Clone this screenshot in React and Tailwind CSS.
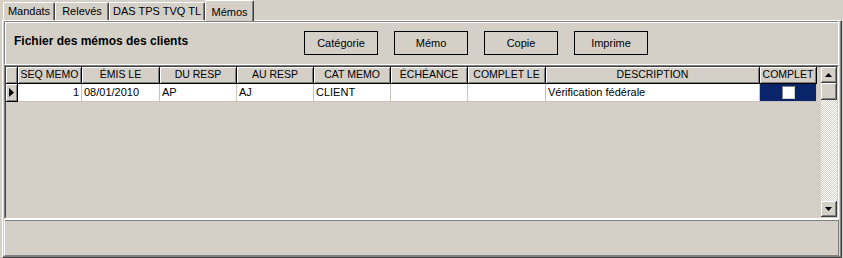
import React from 'react';

const tabs = [
  { label: 'Mandats', w: 'w-[52px]' },
  { label: 'Relevés', w: 'w-[54px]' },
  { label: 'DAS TPS TVQ TL', w: 'w-[96px]' },
];

const cols = [
  { key: 'seq', label: 'SEQ MEMO', w: 'w-[64px]', align: 'text-right' },
  { key: 'emis', label: 'ÉMIS LE', w: 'w-[78px]' },
  { key: 'du', label: 'DU RESP', w: 'w-[77px]' },
  { key: 'au', label: 'AU RESP', w: 'w-[77px]' },
  { key: 'cat', label: 'CAT MEMO', w: 'w-[77px]' },
  { key: 'ech', label: 'ÉCHÉANCE', w: 'w-[77px]' },
  { key: 'compLe', label: 'COMPLET LE', w: 'w-[78px]' },
  { key: 'desc', label: 'DESCRIPTION', w: 'w-[214px]' },
];

const row = {
  seq: '1',
  emis: '08/01/2010',
  du: 'AP',
  au: 'AJ',
  cat: 'CLIENT',
  ech: '',
  compLe: '',
  desc: 'Vérification fédérale',
};

const buttons = ['Catégorie', 'Mémo', 'Copie', 'Imprime'];

function Tab({ label, w }) {
  return (
    <div className={`${w} h-[18px] flex items-center justify-center border-l border-t border-white border-r border-r-[#404040] shadow-[inset_-1px_0_0_#808080] rounded-tl-[2px] rounded-tr-[2px]`}>
      {label}
    </div>
  );
}

function Arrow({ down }) {
  return (
    <svg width="7" height="4" viewBox="0 0 7 4">
      <polygon points={down ? '0,0 7,0 3.5,4' : '0,4 7,4 3.5,0'} fill="#000" />
    </svg>
  );
}

function ScrollButton({ children }) {
  return (
    <div className="h-[16px] w-[16px] flex items-center justify-center bg-[#d4d0c8] border-r border-b border-[#404040] shadow-[inset_1px_1px_0_#fff,inset_-1px_-1px_0_#808080]">
      {children}
    </div>
  );
}

export default function App() {
  return (
    <div className="w-[843px] h-[258px] bg-[#d4d0c8] flex flex-col overflow-hidden font-['Liberation_Sans',Arial,sans-serif] text-[11px] text-black">
      {/* Tabs */}
      <div className="h-[20px] flex items-end pl-[3px] relative z-10">
        {tabs.map((t) => (
          <Tab key={t.label} {...t} />
        ))}
        <div className="w-[49px] h-[21px] -mb-[1px] flex items-start justify-center pt-[3px] bg-[#d4d0c8] border-l border-t border-white border-r border-r-[#404040] shadow-[inset_-1px_0_0_#808080] rounded-tl-[2px] rounded-tr-[2px]">
          Mémos
        </div>
      </div>

      {/* Tab page */}
      <div className="ml-[2px] w-[840px] h-[238px] flex flex-col border-l border-t border-white border-r border-b border-r-[#404040] border-b-[#404040] shadow-[inset_-1px_-1px_0_#808080] pl-[1px] pr-[2px] pb-[1px]">
        {/* Header panel */}
        <div className="h-[44px] flex items-center border-t border-l border-[#808080] border-b border-r border-b-white border-r-white shadow-[inset_1px_1px_0_#fff] pl-[9px]">
          <div className="w-[290px] text-[12px] font-bold -mt-[4px]">Fichier des mémos des clients</div>
          <div className="flex gap-[16px]">
            {buttons.map((b) => (
              <div key={b} className="w-[74px] h-[24px] flex items-center justify-center border border-black">
                {b}
              </div>
            ))}
          </div>
        </div>

        {/* Grid */}
        <div className="h-[154px] border border-[#808080] border-b-white border-r-white">
          <div className="h-full flex border border-[#404040] border-b-[#d4d0c8] border-r-[#d4d0c8]">
            <div className="flex-1 flex flex-col">
              {/* Header row */}
              <div className="flex h-[17px] text-[10.5px]">
                <div className="w-[12px] h-full border-r border-b border-black shadow-[inset_1px_1px_0_#fff,inset_-1px_-1px_0_#808080]" />
                {cols.map((c) => (
                  <div key={c.key} className={`${c.w} h-full flex items-center justify-center border-r border-b border-black shadow-[inset_1px_1px_0_#fff,inset_-1px_-1px_0_#808080] whitespace-nowrap overflow-hidden`}>
                    {c.label}
                  </div>
                ))}
                <div className="w-[57px] h-full flex items-center justify-center border-r border-b border-black shadow-[inset_1px_1px_0_#fff,inset_-1px_-1px_0_#808080]">
                  COMPLET
                </div>
              </div>
              {/* Data row */}
              <div className="flex h-[18px]">
                <div className="w-[12px] h-full flex items-center justify-center border-r border-b border-black shadow-[inset_1px_1px_0_#fff,inset_-1px_-1px_0_#808080]">
                  <svg width="5" height="9" viewBox="0 0 5 9">
                    <polygon points="0,0 5,4.5 0,9" fill="#000" />
                  </svg>
                </div>
                {cols.map((c) => (
                  <div key={c.key} className={`${c.w} h-full flex items-center ${c.align === 'text-right' ? 'justify-end' : ''} px-[2px] bg-white border-r border-b border-[#c8c4bc] whitespace-nowrap overflow-hidden`}>
                    {row[c.key]}
                  </div>
                ))}
                <div className="w-[57px] h-full flex items-center justify-center bg-[#0a246a] border-r border-b border-[#c8c4bc]">
                  <div className="w-[13px] h-[13px] bg-white border border-[#808080] border-r-[#d4d0c8] border-b-[#d4d0c8]" />
                </div>
              </div>
            </div>

            {/* Scrollbar */}
            <div className="w-[16px] flex flex-col">
              <ScrollButton>
                <Arrow />
              </ScrollButton>
              <div className="h-[17px] bg-[#d4d0c8] border-r border-b border-[#404040] shadow-[inset_1px_1px_0_#fff,inset_-1px_-1px_0_#808080]" />
              <div className="flex-1 bg-[repeating-conic-gradient(#fff_0_25%,#d4d0c8_0_50%)] bg-[length:2px_2px]" />
              <ScrollButton>
                <Arrow down />
              </ScrollButton>
            </div>
          </div>
        </div>

        {/* Bottom panel */}
        <div className="flex-1 border-t border-l border-white border-b border-r border-b-[#808080] border-r-[#808080] shadow-[inset_0_1px_0_#808080]" />
      </div>
    </div>
  );
}
